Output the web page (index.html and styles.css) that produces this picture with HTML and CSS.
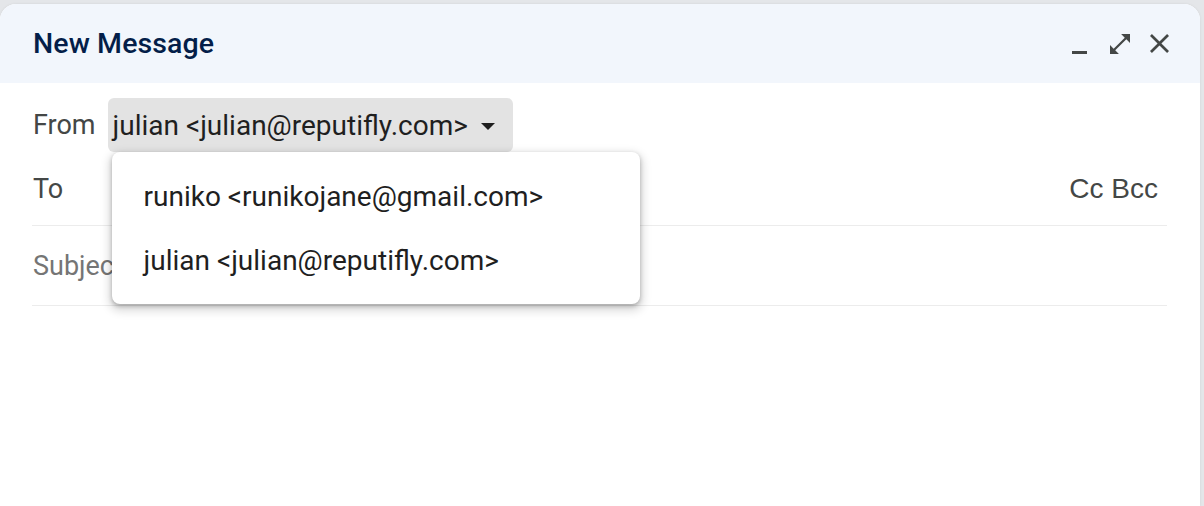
FILE: index.html
```html
<!DOCTYPE html>
<html>
<head>
<meta charset="utf-8">
<link rel="stylesheet" href="styles.css">
</head>
<body>
<div class="compose">
  <div class="header">
    <div class="title">New Message</div>
    <div class="hdr-icons">
      <svg class="ic-min" width="16" height="20" viewBox="0 0 16 20"><rect x="0" y="17" width="15" height="3" fill="#444746"/></svg>
      <svg class="ic-pop" width="20" height="20" viewBox="3 3 18 18"><path d="M21 11V3h-8l3.29 3.29-10 10L3 13v8h8l-3.29-3.29 10-10z" fill="#444746"/></svg>
      <svg class="ic-close" width="19" height="20" viewBox="5 5 14 14.7"><path d="M19 6.41L17.59 5 12 10.59 6.41 5 5 6.41 10.59 12 5 17.59 6.41 19 12 13.41 17.59 19 19 17.59 13.41 12z" fill="#444746"/></svg>
    </div>
  </div>
  <div class="fields">
    <div class="row-from">
      <span class="label">From</span>
      <div class="chip-wrap">
        <div class="chip">
          <span>julian &lt;julian@reputifly.com&gt;</span>
          <span class="caret"></span>
        </div>
        <div class="menu">
          <div class="menu-item">runiko &lt;runikojane@gmail.com&gt;</div>
          <div class="menu-item">julian &lt;julian@reputifly.com&gt;</div>
        </div>
      </div>
    </div>
    <div class="row row-to">
      <span class="label">To</span>
      <span class="ccbcc">Cc Bcc</span>
    </div>
    <div class="row row-subject">
      <span class="placeholder">Subject</span>
    </div>
  </div>
</div>
</body>
</html>
```
FILE: styles.css
```css
html, body {
  margin: 0;
  padding: 0;
}
body {
  background: #e4e6e9;
  width: 1204px;
  height: 506px;
  overflow: hidden;
  font-family: Roboto, "Liberation Sans", Arial, sans-serif;
}
.compose {
  margin-top: 4px;
  width: 1200px;
  height: 502px;
  background: #ffffff;
  border-radius: 16px 16px 0 0;
  box-shadow: 0 0 3px rgba(0,0,0,0.08);
}
.header {
  height: 79px;
  background: #f2f6fc;
  border-radius: 16px 16px 0 0;
  display: flex;
  align-items: center;
  padding: 0 31px 0 33px;
}
.title {
  flex: 1;
  font-size: 28.5px;
  font-weight: 500;
  color: #041e49;
  letter-spacing: 0.1px;
}
.hdr-icons {
  display: flex;
  align-items: center;
}
.ic-min { margin-right: 22px; }
.ic-pop { margin-right: 20px; }
.fields {
  padding: 0 33px 0 32px;
}
.row-from {
  display: flex;
  align-items: center;
  padding-top: 15px;
}
.label {
  font-size: 27px;
  color: #444746;
  padding-left: 1px;
}
.row-from .label {
  margin-right: 12px;
}
.chip-wrap {
  position: relative;
}
.chip {
  height: 54px;
  background: #e3e3e3;
  border-radius: 6px;
  display: flex;
  align-items: center;
  padding: 0 18px 0 5px;
  font-size: 28px;
  color: #1f1f1f;
}
.caret {
  width: 0;
  height: 0;
  border-left: 7px solid transparent;
  border-right: 7px solid transparent;
  border-top: 7px solid #1f1f1f;
  margin-left: 13px;
  margin-top: 2px;
}
.menu {
  position: absolute;
  top: 100%;
  left: 4px;
  width: 528px;
  padding: 12px 0;
  background: #ffffff;
  border-radius: 8px;
  box-shadow: 0 4px 10px 3px rgba(0,0,0,0.14), 0 2px 4px rgba(0,0,0,0.25);
  z-index: 2;
}
.menu-item {
  height: 64px;
  display: flex;
  align-items: center;
  padding-left: 32px;
  font-size: 28px;
  color: #1f1f1f;
}
.row {
  display: flex;
  align-items: center;
  justify-content: space-between;
  border-bottom: 1px solid #ececec;
}
.row-to {
  height: 73px;
}
.row-subject {
  height: 79px;
}
.ccbcc {
  font-family: "Liberation Sans", Arial, sans-serif;
  font-size: 28px;
  color: #444746;
  margin-right: 9px;
}
.placeholder {
  font-size: 27px;
  color: #757575;
  padding-left: 1px;
}
```
